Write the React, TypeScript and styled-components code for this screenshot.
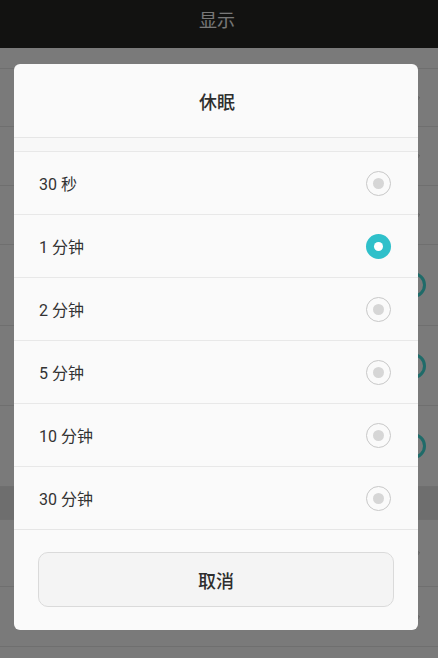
import React from 'react';
import styled, { createGlobalStyle } from 'styled-components';
import { ChevronRight } from 'lucide-react';

const GlobalStyle = createGlobalStyle`
  html, body {
    margin: 0;
    padding: 0;
    background: #7a7a7a;
  }
  body {
    font-family: Roboto, "Noto Sans CJK SC", sans-serif;
  }
`;

const Screen = styled.div`
  position: relative;
  width: 438px;
  height: 658px;
  overflow: hidden;
  background: #f4f4f4;
`;

/*--- SETTINGS PAGE BEHIND ---*/

const AppBar = styled.header`
  height: 48px;
  background: #242422;
  color: #f0f0f0;
  font-size: 18px;
  display: flex;
  justify-content: center;
  align-items: center;
  padding: 0 4px 11px 0;
  box-sizing: border-box;
`;

const PageRow = styled.div<{ $h: number; $band?: boolean }>`
  height: ${(p) => p.$h}px;
  box-sizing: border-box;
  border-bottom: 1px solid #dedede;
  background: ${(p) => (p.$band ? '#dcdcdc' : '#f4f4f4')};
  display: flex;
  justify-content: flex-end;
  align-items: center;
  padding-right: 14px;
  color: #b8b8b8;
`;

const SwitchKnob = styled.div`
  width: 26px;
  height: 26px;
  margin-right: -2px;
  border-radius: 50%;
  border: 3px solid #3ed6d2;
  box-sizing: border-box;
`;

/*--- DIALOG ---*/

const Overlay = styled.div`
  position: absolute;
  inset: 0;
  background: rgba(0, 0, 0, 0.5);
  display: flex;
  justify-content: flex-start;
  align-items: flex-start;
  padding: 64px 0 0 14px;
  box-sizing: border-box;
`;

const Dialog = styled.div`
  width: 404px;
  background: #fafafa;
  border-radius: 6px;
  overflow: hidden;
`;

const Title = styled.div`
  height: 73px;
  border-bottom: 1px solid #e6e6e6;
  display: flex;
  justify-content: center;
  align-items: center;
  font-size: 18px;
  font-weight: 500;
  color: #2e2e2e;
  padding-left: 2px;
`;

const ScrollGap = styled.div`
  height: 13px;
  background: #f8f8f8;
`;

const Option = styled.div`
  height: 62px;
  border-top: 1px solid #e8e8e8;
  display: flex;
  justify-content: space-between;
  align-items: center;
  padding: 0 27px 0 25px;
  font-size: 16px;
  color: #333;
`;

const Radio = styled.span<{ $on?: boolean }>`
  width: 25px;
  height: 25px;
  border-radius: 50%;
  box-sizing: border-box;
  display: flex;
  justify-content: center;
  align-items: center;
  background: ${(p) => (p.$on ? '#2fc0ca' : 'transparent')};
  border: ${(p) => (p.$on ? 'none' : '1px solid #c8c8c8')};

  &::after {
    content: '';
    width: ${(p) => (p.$on ? 9 : 11)}px;
    height: ${(p) => (p.$on ? 9 : 11)}px;
    border-radius: 50%;
    background: ${(p) => (p.$on ? '#ffffff' : '#d6d6d6')};
  }
`;

const Footer = styled.div`
  border-top: 1px solid #e6e6e6;
  padding: 22px 24px 23px;
`;

const CancelButton = styled.button`
  width: 100%;
  height: 55px;
  border: 1px solid #dadada;
  border-radius: 10px;
  background: #f4f4f4;
  font-family: Roboto, "Noto Sans CJK SC", sans-serif;
  font-size: 18px;
  font-weight: 500;
  color: #2e2e2e;
`;

const options = ['30 秒', '1 分钟', '2 分钟', '5 分钟', '10 分钟', '30 分钟'];

const pageRows: { h: number; kind?: 'chevron' | 'switch' | 'band' }[] = [
  { h: 21 },
  { h: 58, kind: 'chevron' },
  { h: 59, kind: 'chevron' },
  { h: 59, kind: 'chevron' },
  { h: 81, kind: 'switch' },
  { h: 80, kind: 'switch' },
  { h: 81, kind: 'switch' },
  { h: 33, kind: 'band' },
  { h: 67, kind: 'chevron' },
  { h: 60, kind: 'chevron' },
  { h: 40 },
];

export default function App() {
  return (
    <Screen>
      <GlobalStyle />
      <AppBar>显示</AppBar>
      {pageRows.map((r, i) => (
        <PageRow key={i} $h={r.h} $band={r.kind === 'band'}>
          {r.kind === 'chevron' && <ChevronRight size={12} strokeWidth={2} />}
          {r.kind === 'switch' && <SwitchKnob />}
        </PageRow>
      ))}
      <Overlay>
        <Dialog>
          <Title>休眠</Title>
          <ScrollGap />
          {options.map((o, i) => (
            <Option key={o}>
              <span>{o}</span>
              <Radio $on={i === 1} />
            </Option>
          ))}
          <Footer>
            <CancelButton>取消</CancelButton>
          </Footer>
        </Dialog>
      </Overlay>
    </Screen>
  );
}
